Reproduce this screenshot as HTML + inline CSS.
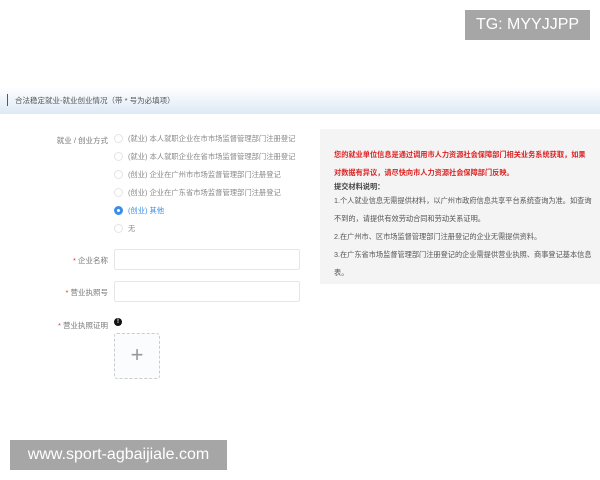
<!DOCTYPE html>
<html><head><meta charset="utf-8"><style>
*{margin:0;padding:0;box-sizing:border-box}
body{width:600px;height:480px;background:#fff;position:relative;overflow:hidden;font-family:"Liberation Sans","Noto Sans CJK SC",sans-serif;color:#666}
.a{position:absolute;white-space:nowrap}
.hdr{position:absolute;left:0;top:88px;width:600px;height:26px;background:linear-gradient(#fdfeff,#dde9f5);}
.hdr .bar{position:absolute;left:7px;top:6px;width:1px;height:12px;background:#557}
.hdr span{position:absolute;left:15px;top:7px;font-size:7.5px;color:#555}
.lbl{font-size:7.5px;color:#777;text-align:right;width:108px;left:0}
.r{left:114px;width:9px;height:9px;border:1px solid #e4e4e4;border-radius:50%}
.rt{left:128px;font-size:7.3px;color:#888}
.inp{position:absolute;left:114px;width:186px;height:21px;border:1px solid #e6e6e6;border-radius:2px}
.red{color:#e33}
.panel{position:absolute;left:320px;top:129px;width:280px;height:155px;background:#f4f4f5}
.panel p{font-size:7.2px;line-height:18px;color:#555;padding:0 8px 0 14px}
.wm{position:absolute;background:#a6a6a6;color:#fff;font-size:16px;line-height:30px}
</style></head><body>
<div class="hdr"><div class="bar"></div><span>合法稳定就业-就业创业情况（带 * 号为必填项）</span></div>
<div class="a lbl" style="top:135px">就业 / 创业方式</div>
<div class="a r" style="top:134px"></div><div class="a rt" style="top:134px">(就业) 本人就职企业在市市场监督管理部门注册登记</div>
<div class="a r" style="top:152px"></div><div class="a rt" style="top:152px">(就业) 本人就职企业在省市场监督管理部门注册登记</div>
<div class="a r" style="top:170px"></div><div class="a rt" style="top:170px">(创业) 企业在广州市市场监督管理部门注册登记</div>
<div class="a r" style="top:188px"></div><div class="a rt" style="top:188px">(创业) 企业在广东省市场监督管理部门注册登记</div>
<div class="a r" style="top:206px;border:3px solid #3a8ee6"></div><div class="a rt" style="top:206px;color:#3a8ee6">(创业) 其他</div>
<div class="a r" style="top:224px"></div><div class="a rt" style="top:224px">无</div>
<div class="a lbl" style="top:255px"><span class="red">* </span>企业名称</div>
<div class="inp" style="top:249px"></div>
<div class="a lbl" style="top:287px"><span class="red">* </span>营业执照号</div>
<div class="inp" style="top:281px"></div>
<div class="a lbl" style="top:320px"><span class="red">* </span>营业执照证明</div>
<div class="a" style="left:114px;top:318px;width:8px;height:8px;border-radius:50%;background:#111;color:#fff;font-size:6px;line-height:8px;text-align:center;font-weight:bold">!</div>
<div class="a" style="left:114px;top:333px;width:46px;height:46px;border:1px dashed #ccc;border-radius:3px;background:#fbfcfd;text-align:center;line-height:42px;font-size:22px;color:#999;font-weight:200">+</div>
<div class="panel">
<p style="padding-top:17px;color:#d22;font-weight:bold">您的就业单位信息是通过调用市人力资源社会保障部门相关业务系统获取，如果对数据有异议，请尽快向市人力资源社会保障部门反映。</p>
<p style="line-height:10px;font-weight:bold;color:#444">提交材料说明：</p>
<p>1.个人就业信息无需提供材料，以广州市政府信息共享平台系统查询为准。如查询不到的，请提供有效劳动合同和劳动关系证明。</p>
<p>2.在广州市、区市场监督管理部门注册登记的企业无需提供资料。</p>
<p>3.在广东省市场监督管理部门注册登记的企业需提供营业执照、商事登记基本信息表。</p>
</div>
<div class="wm" style="left:465px;top:10px;width:125px;text-align:center">TG: MYYJJPP</div>
<div class="wm" style="left:10px;top:440px;width:217px;text-align:center">www.sport-agbaijiale.com</div>
</body></html>
